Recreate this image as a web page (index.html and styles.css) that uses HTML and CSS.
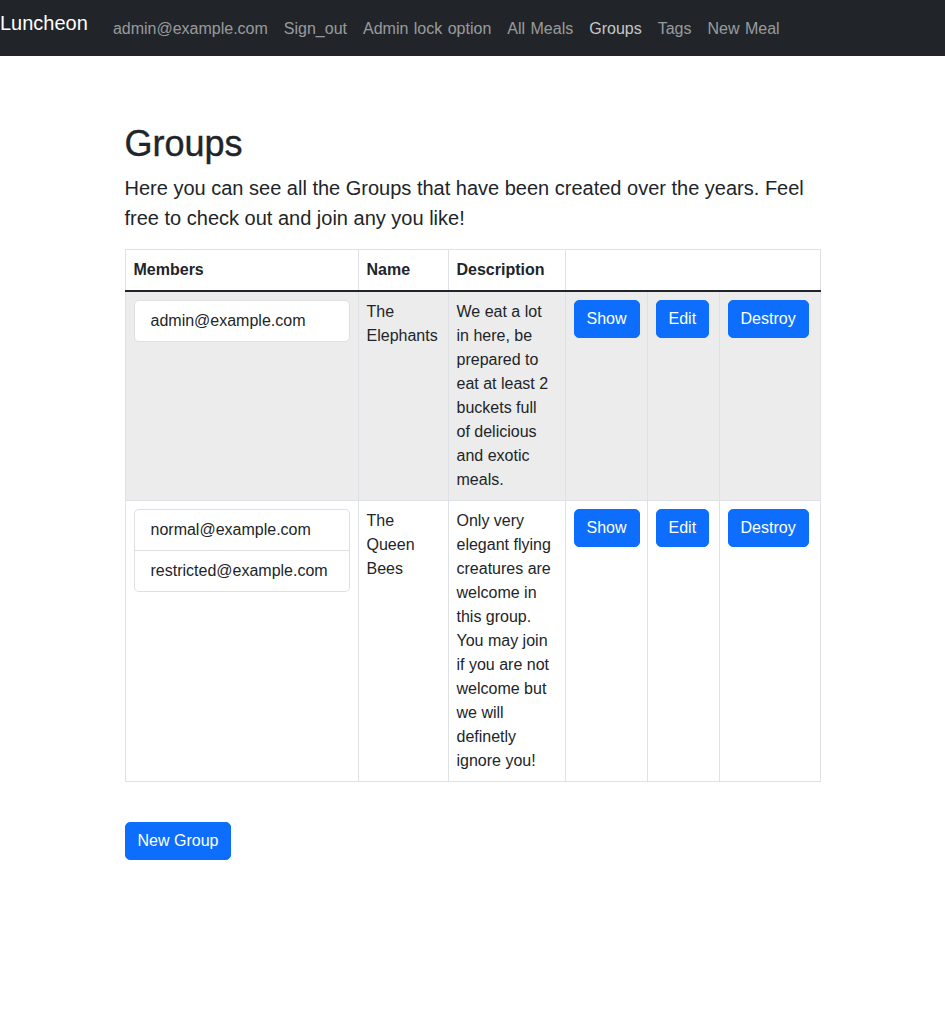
FILE: index.html
```html
<!DOCTYPE html>
<html lang="en">
<head>
<meta charset="utf-8">
<title>Luncheon</title>
<link rel="stylesheet" href="styles.css">
</head>
<body>
<nav class="navbar">
  <a class="brand" href="#">Luncheon</a>
  <ul class="nav">
    <li><a class="nav-link" href="#">admin@example.com</a></li>
    <li><a class="nav-link" href="#">Sign_out</a></li>
    <li><a class="nav-link" href="#">Admin lock option</a></li>
    <li><a class="nav-link" href="#">All Meals</a></li>
    <li><a class="nav-link active" href="#">Groups</a></li>
    <li><a class="nav-link" href="#">Tags</a></li>
    <li><a class="nav-link" href="#">New Meal</a></li>
  </ul>
</nav>

<main class="container">
  <h1 class="title">Groups</h1>
  <p class="lead">Here you can see all the Groups that have been created over the years. Feel free to check out and join any you like!</p>

  <table class="groups">
    <colgroup>
      <col class="col-members">
      <col class="col-name">
      <col class="col-desc">
      <col class="col-show">
      <col class="col-edit">
      <col class="col-destroy">
    </colgroup>
    <thead>
      <tr>
        <th>Members</th>
        <th>Name</th>
        <th>Description</th>
        <th colspan="3"></th>
      </tr>
    </thead>
    <tbody>
      <tr class="hovered">
        <td>
          <ul class="list-group">
            <li class="list-item">admin@example.com</li>
          </ul>
        </td>
        <td>The Elephants</td>
        <td class="desc">We eat a lot in here, be prepared to eat at least 2 buckets full of delicious and exotic meals.</td>
        <td><a class="btn" href="#">Show</a></td>
        <td><a class="btn" href="#">Edit</a></td>
        <td><a class="btn" href="#">Destroy</a></td>
      </tr>
      <tr>
        <td>
          <ul class="list-group">
            <li class="list-item">normal@example.com</li>
            <li class="list-item">restricted@example.com</li>
          </ul>
        </td>
        <td>The Queen Bees</td>
        <td class="desc">Only very elegant flying creatures are welcome in this group. You may join if you are not welcome but we will definetly ignore you!</td>
        <td><a class="btn" href="#">Show</a></td>
        <td><a class="btn" href="#">Edit</a></td>
        <td><a class="btn" href="#">Destroy</a></td>
      </tr>
    </tbody>
  </table>

  <div class="actions">
    <a class="btn" href="#">New Group</a>
  </div>
</main>
</body>
</html>
```
FILE: styles.css
```css
* {
  box-sizing: border-box;
}

body {
  margin: 0;
  font-family: "Liberation Sans", Arial, sans-serif;
  font-size: 16px;
  line-height: 24px;
  color: #212529;
  background: #fff;
}

/* Navbar */
.navbar {
  display: flex;
  align-items: flex-start;
  height: 56px;
  background: #212529;
}

.brand {
  color: #fff;
  font-size: 20px;
  line-height: 30px;
  padding-top: 8px;
  margin-right: 17px;
  text-decoration: none;
}

.nav {
  display: flex;
  list-style: none;
  margin: 0;
  padding: 9px 0 0;
}

.nav-link {
  display: block;
  padding: 8px;
  color: rgba(255, 255, 255, 0.55);
  text-decoration: none;
  word-spacing: 1px;
}

.nav-link.active {
  color: rgba(255, 255, 255, 0.75);
}

/* Main */
.container {
  max-width: 720px;
  margin: 0 auto;
  padding: 66px 12px 0;
}

.title {
  font-size: 36px;
  line-height: 43.2px;
  font-weight: 500;
  margin: 0 0 8px;
  -webkit-text-stroke: 0.4px #212529;
}

.lead {
  font-size: 20px;
  line-height: 30px;
  font-weight: 300;
  margin: 0 0 16px;
}

/* Table */
.groups {
  width: 100%;
  border-collapse: collapse;
  table-layout: fixed;
  vertical-align: top;
}

.col-members { width: 233px; }
.col-name { width: 90px; }
.col-desc { width: 117px; }
.col-show { width: 82px; }
.col-edit { width: 72px; }
.col-destroy { width: 101px; }

.groups th,
.groups td {
  padding: 8px;
  border: 1px solid #dee2e6;
  text-align: left;
  vertical-align: top;
}

.groups th {
  font-weight: 700;
}

.groups tbody tr:first-child td {
  border-top: 2px solid #212529;
}

.groups .desc {
  padding-right: 11px;
}

.groups tr.hovered td {
  background: #ececec;
}

/* List group */
.list-group {
  list-style: none;
  margin: 0;
  padding: 0;
  display: flex;
  flex-direction: column;
}

.list-item {
  padding: 8px 16px;
  background: #fff;
  border: 1px solid rgba(0, 0, 0, 0.125);
}

.list-item + .list-item {
  border-top-width: 0;
}

.list-item:first-child {
  border-top-left-radius: 5px;
  border-top-right-radius: 5px;
}

.list-item:last-child {
  border-bottom-left-radius: 5px;
  border-bottom-right-radius: 5px;
}

/* Buttons */
.btn {
  display: inline-block;
  padding: 6px 12px;
  font-size: 16px;
  line-height: 24px;
  color: #fff;
  background: #0d6efd;
  border: 1px solid #0d6efd;
  border-radius: 5px;
  text-decoration: none;
}

.actions {
  margin-top: 40px;
}
```
